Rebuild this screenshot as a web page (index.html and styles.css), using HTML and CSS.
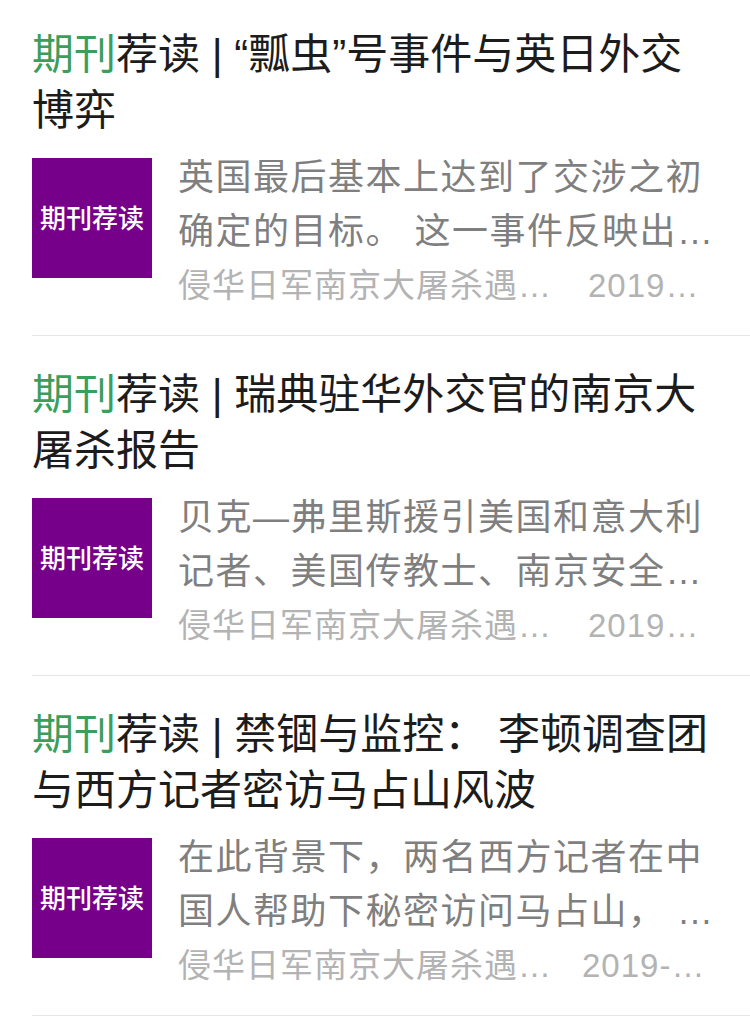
FILE: index.html
```html
<!DOCTYPE html>
<html>
<head>
    <meta charset="utf-8">
    <title>期刊荐读</title>
    <link rel="stylesheet" href="styles.css">
</head>
<body>
    <div class="list">
        <div class="item">
            <div class="title"><span class="hl">期刊</span>荐读 | “瓢虫”号事件与英日外交博弈</div>
            <div class="body">
                <div class="thumb">期刊荐读</div>
                <div class="info">
                    <div class="desc">英国最后基本上达到了交涉之初确定的目标。 这一事件反映出英日两国在远东的外交博弈与力量消长。</div>
                    <div class="meta">
                        <span class="account">侵华日军南京大屠杀遇难同胞纪念馆</span>
                        <span class="date">2019-12-13</span>
                    </div>
                </div>
            </div>
        </div>

        <div class="item">
            <div class="title"><span class="hl">期刊</span>荐读 | 瑞典驻华外交官的南京大屠杀报告</div>
            <div class="body">
                <div class="thumb">期刊荐读</div>
                <div class="info">
                    <div class="desc">贝克—弗里斯援引美国和意大利记者、美国传教士、南京安全区国际委员会成员的报告。</div>
                    <div class="meta">
                        <span class="account">侵华日军南京大屠杀遇难同胞纪念馆</span>
                        <span class="date">2019-12-06</span>
                    </div>
                </div>
            </div>
        </div>

        <div class="item">
            <div class="title"><span class="hl">期刊</span>荐读 | 禁锢与监控： 李顿调查团与西方记者密访马占山风波</div>
            <div class="body">
                <div class="thumb">期刊荐读</div>
                <div class="info">
                    <div class="desc">在此背景下，两名西方记者在中国人帮助下秘密访问马占山， 引发了一场外交风波。</div>
                    <div class="meta">
                        <span class="account tight">侵华日军南京大屠杀遇难同胞纪念馆</span>
                        <span class="date wide">2019-11-29</span>
                    </div>
                </div>
            </div>
        </div>
    </div>
</body>
</html>
```

FILE: styles.css
```css
body {
    margin: 0;
    background-color: #ffffff;
    font-family: "Liberation Sans", "Noto Sans CJK SC", sans-serif;
}
.list {
    padding-left: 32px;
}
.item {
    padding: 31px 0 22px;
    border-bottom: 1px solid #e6e6e6;
}
.item:first-child {
    padding-top: 27px;
}
.title {
    font-size: 42px;
    line-height: 56px;
    color: #1c1c1c;
    padding-right: 30px;
}
.hl {
    color: #3b9e5c;
}
.body {
    display: flex;
    align-items: flex-start;
    margin-top: 19px;
}
.thumb {
    width: 120px;
    height: 120px;
    flex-shrink: 0;
    background-color: #76008a;
    color: #ffffff;
    font-weight: 500;
    font-size: 26px;
    display: flex;
    align-items: center;
    justify-content: center;
    padding-bottom: 3px;
    box-sizing: border-box;
}
.info {
    flex: 1;
    min-width: 0;
    margin-left: 26px;
    margin-top: -7px;
    padding-right: 30px;
}
.desc {
    font-size: 36px;
    letter-spacing: 1.5px;
    line-height: 54px;
    color: #7f7f7f;
    display: -webkit-box;
    -webkit-box-orient: vertical;
    -webkit-line-clamp: 2;
    overflow: hidden;
}
.meta {
    display: flex;
    font-size: 33px;
    letter-spacing: 1px;
    line-height: 54px;
    color: #b3b3b3;
    white-space: nowrap;
}
.account {
    max-width: 380px;
    overflow: hidden;
    text-overflow: ellipsis;
    margin-right: 30px;
}
.account.tight {
    margin-right: 24px;
}
.date {
    max-width: 112px;
    overflow: hidden;
    text-overflow: ellipsis;
}
.date.wide {
    max-width: 134px;
}
```
